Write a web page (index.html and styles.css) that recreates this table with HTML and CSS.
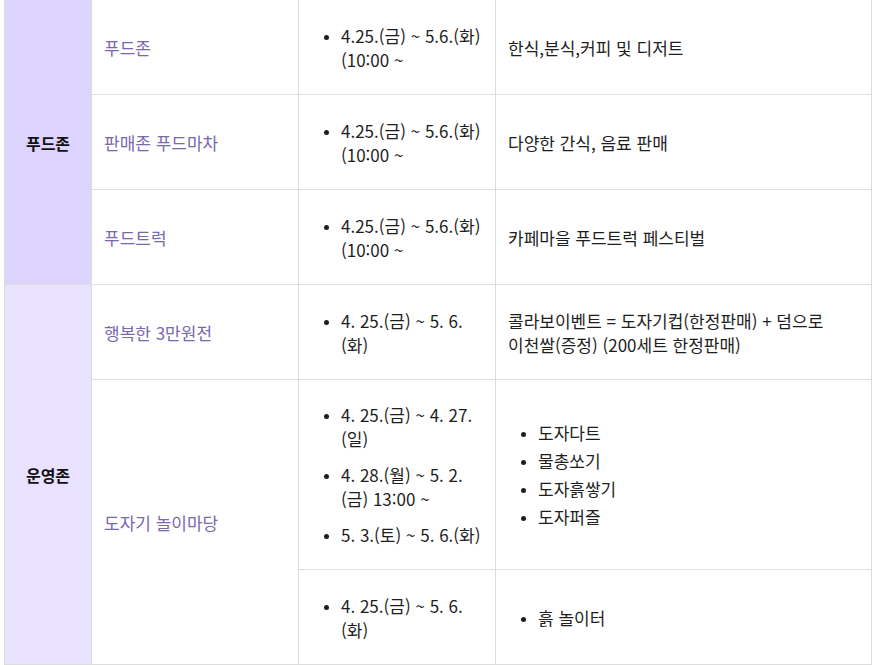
FILE: index.html
```html
<!DOCTYPE html>
<html lang="ko">
<head>
<meta charset="utf-8">
<title>행사 안내</title>
<link rel="stylesheet" href="styles.css">
</head>
<body>
<table class="schedule">
  <colgroup>
    <col class="c-zone">
    <col class="c-name">
    <col class="c-date">
    <col class="c-desc">
  </colgroup>
  <tbody>
    <tr>
      <th class="zone zone-food" rowspan="3">푸드존</th>
      <td class="name">푸드존</td>
      <td class="date"><ul class="dates"><li>4.25.(금) ~ 5.6.(화) (10:00 ~</li></ul></td>
      <td class="desc">한식,분식,커피 및 디저트</td>
    </tr>
    <tr>
      <td class="name">판매존 푸드마차</td>
      <td class="date"><ul class="dates"><li>4.25.(금) ~ 5.6.(화) (10:00 ~</li></ul></td>
      <td class="desc">다양한 간식, 음료 판매</td>
    </tr>
    <tr>
      <td class="name">푸드트럭</td>
      <td class="date"><ul class="dates"><li>4.25.(금) ~ 5.6.(화) (10:00 ~</li></ul></td>
      <td class="desc">카페마을 푸드트럭 페스티벌</td>
    </tr>
    <tr>
      <th class="zone zone-op" rowspan="3">운영존</th>
      <td class="name">행복한 3만원전</td>
      <td class="date"><ul class="dates"><li>4. 25.(금) ~ 5. 6.(화)</li></ul></td>
      <td class="desc">콜라보이벤트 = 도자기컵(한정판매) + 덤으로 이천쌀(증정) (200세트 한정판매)</td>
    </tr>
    <tr>
      <td class="name" rowspan="2">도자기 놀이마당</td>
      <td class="date">
        <ul class="dates">
          <li>4. 25.(금) ~ 4. 27.(일)</li>
          <li>4. 28.(월) ~ 5. 2.(금) 13:00 ~</li>
          <li>5. 3.(토) ~ 5. 6.(화)</li>
        </ul>
      </td>
      <td class="desc">
        <ul class="items">
          <li>도자다트</li>
          <li>물총쏘기</li>
          <li>도자흙쌓기</li>
          <li>도자퍼즐</li>
        </ul>
      </td>
    </tr>
    <tr>
      <td class="date"><ul class="dates"><li>4. 25.(금) ~ 5. 6.(화)</li></ul></td>
      <td class="desc"><ul class="items"><li>흙 놀이터</li></ul></td>
    </tr>
  </tbody>
</table>
</body>
</html>
```

FILE: styles.css
```css
html, body {
  margin: 0;
  padding: 0;
  background: #ffffff;
}

body {
  font-family: "Noto Sans CJK KR", "Noto Sans", sans-serif;
  font-size: 17px;
  line-height: 24px;
  color: #1e1e1e;
  word-break: keep-all;
}

.schedule {
  border-collapse: collapse;
  table-layout: fixed;
  width: 867px;
  margin: -1px 0 0 4px;
}

.c-zone { width: 87px; }
.c-name { width: 207px; }
.c-date { width: 197px; }
.c-desc { width: 376px; }

.schedule th,
.schedule td {
  border: 1px solid #dddddd;
  padding: 23px 12px 22px;
  vertical-align: middle;
  text-align: left;
  height: 49px;
}

.zone {
  text-align: center !important;
  font-size: 16px;
  font-weight: 700;
  color: #111111;
}

.zone-food { background: #dcd3fe; }
.zone-op { background: #e9e2fe; }

.name {
  color: #7a68ad;
}

.dates,
.items {
  margin: 0;
  padding: 0 0 0 30px;
}

.dates li::marker,
.items li::marker {
  font-size: 13px;
}

.dates li + li {
  margin-top: 12px;
}

.items li {
  line-height: 28px;
}
```
